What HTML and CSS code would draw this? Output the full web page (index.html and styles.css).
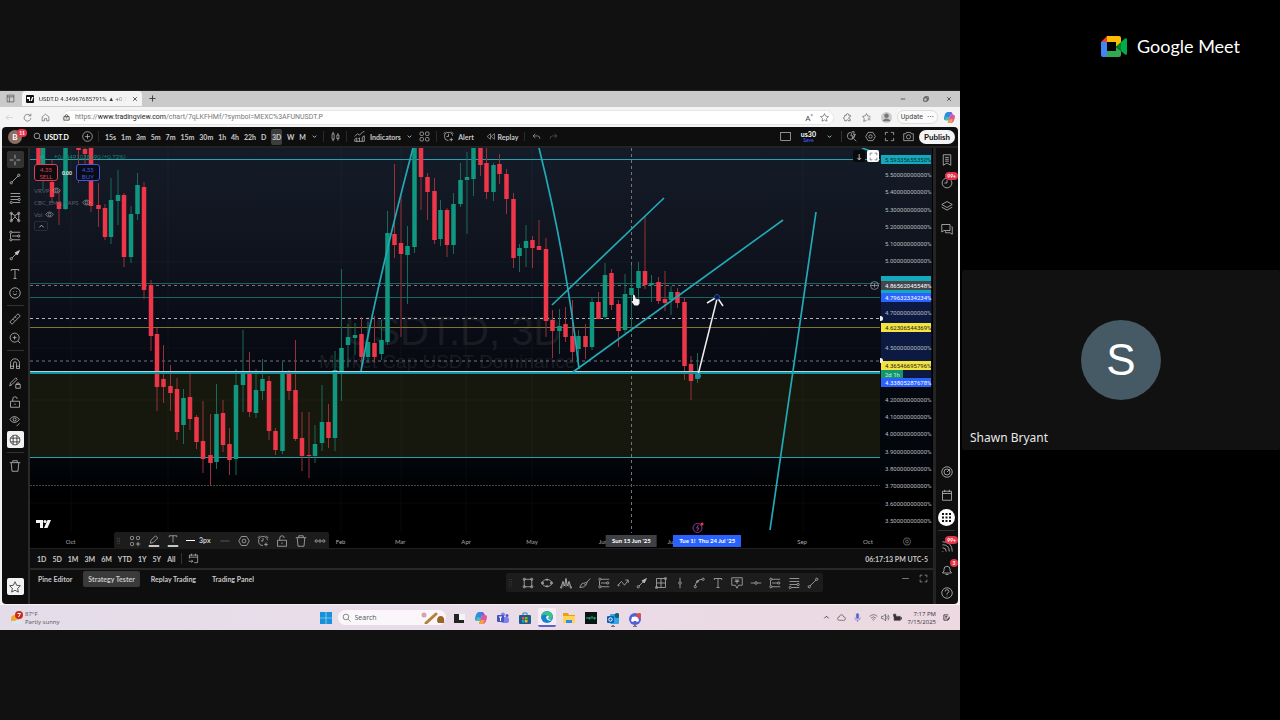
FILE: index.html
```html
<!DOCTYPE html>
<html lang="en">
<head>
<meta charset="utf-8">
<title>Google Meet</title>
<link rel="stylesheet" href="styles.css">
</head>
<body>
<svg class="defs" aria-hidden="true">
  <symbol id="chev" viewBox="0 0 16 16"><path d="M4 6l4 4 4-4"/></symbol>
  <symbol id="search" viewBox="0 0 16 16"><circle cx="7" cy="7" r="5"/><path d="M11 11l4 4"/></symbol>
  <symbol id="plusc" viewBox="0 0 16 16"><circle cx="8" cy="8" r="7"/><path d="M8 4.500v7M4.500 8h7"/></symbol>
  <symbol id="candles" viewBox="0 0 16 16"><path d="M3 4h3v8H3zM4.500 1v3M4.500 12v3M10 6h3v5h-3zM11.500 3v3M11.500 11v3"/></symbol>
  <symbol id="indic" viewBox="0 0 16 16"><path d="M1 8l4-4 3 2 5-5h2M1 15v-3l3-2v5M4 15h11V7l-3 2v6M8 15v-5l-2 1M1 15h4"/></symbol>
  <symbol id="grid4" viewBox="0 0 16 16"><rect x="1.500" y="1.500" width="5" height="5" rx="1.500"/><rect x="9.500" y="1.500" width="5" height="5" rx="1.500"/><rect x="1.500" y="9.500" width="5" height="5" rx="1.500"/><rect x="9.500" y="9.500" width="5" height="5" rx="1.500"/></symbol>
  <symbol id="grid4p" viewBox="0 0 16 16"><rect x="2" y="2" width="4" height="4" rx="1"/><rect x="10" y="2" width="4" height="4" rx="1"/><rect x="2" y="10" width="4" height="4" rx="1"/><path d="M12 9v6M9 12h6"/></symbol>
  <symbol id="alarm" viewBox="0 0 16 16"><path d="M14 7a6 6 0 1 0-6 7M8 4v4H5M1 4l3-3M12 1l3 3M12 10v5M9.500 12.500h5"/></symbol>
  <symbol id="replay" viewBox="0 0 16 16"><path d="M8 3L2 8l6 5zM15 3L9 8l6 5z"/></symbol>
  <symbol id="undo" viewBox="0 0 16 16"><path d="M6 3L2 7l4 4M2 7h8q4 0 4 5"/></symbol>
  <symbol id="redo" viewBox="0 0 16 16"><path d="M10 3l4 4-4 4M14 7H6q-4 0-4 5"/></symbol>
  <symbol id="square" viewBox="0 0 16 16"><rect x="1" y="2" width="14" height="12"/></symbol>
  <symbol id="quick" viewBox="0 0 16 16"><path d="M12 6a5 5 0 1 1-5-4M11 11l4 4M9 1L7 7h3l-1 4 5-6h-3l1-4z"/></symbol>
  <symbol id="hex" viewBox="0 0 16 16"><path d="M4.500 2h7L15 8l-3.500 6h-7L1 8z"/><circle cx="8" cy="8" r="2.500"/></symbol>
  <symbol id="full" viewBox="0 0 16 16"><path d="M2 6V2h4M10 2h4v4M14 10v4h-4M6 14H2v-4"/></symbol>
  <symbol id="cam" viewBox="0 0 16 16"><path d="M1 4h3l1-2h6l1 2h3v10H1z"/><circle cx="8" cy="8.500" r="3"/></symbol>
  <symbol id="cross" viewBox="0 0 16 16"><path d="M8 1v5M8 10v5M1 8h5M10 8h5"/></symbol>
  <symbol id="trend" viewBox="0 0 16 16"><path d="M4 12l8-8"/><circle cx="3" cy="13" r="1.500"/><circle cx="13" cy="3" r="1.500"/></symbol>
  <symbol id="fib" viewBox="0 0 16 16"><path d="M2 2h13M2 6h13M2 10h10M5 14h10"/><circle cx="13.500" cy="10" r="1.500"/><circle cx="3" cy="14" r="1.500"/></symbol>
  <symbol id="xabcd" viewBox="0 0 16 16"><path d="M3 13V3l5 3 5-3v10L8 8zM8 6v2"/><circle cx="3" cy="3" r="1.500"/><circle cx="13" cy="3" r="1.500"/><circle cx="3" cy="13" r="1.500"/><circle cx="13" cy="13" r="1.500"/></symbol>
  <symbol id="proj" viewBox="0 0 16 16"><path d="M4 3h11M4 8h8M4 13h11M2 5v6"/><circle cx="2.500" cy="3" r="1.500"/><circle cx="13" cy="8" r="1.500"/><circle cx="2.500" cy="13" r="1.500"/></symbol>
  <symbol id="arrow" viewBox="0 0 16 16"><path d="M4 12l9-9"/><circle cx="3" cy="13" r="1.500"/><path class="solid" d="M14 2l-3 6-3-3z"/></symbol>
  <symbol id="text" viewBox="0 0 16 16"><path d="M3 4V2h10v2M8 2v12M6 14h4"/></symbol>
  <symbol id="smile" viewBox="0 0 16 16"><circle cx="8" cy="8" r="7"/><path d="M5.500 9q2.500 3 5 0M6 5.500v1M10 5.500v1"/></symbol>
  <symbol id="ruler" viewBox="0 0 16 16"><path d="M1 12L12 1l3 3L4 15zM5 8l2 2M8 5l2 2"/></symbol>
  <symbol id="zoomin" viewBox="0 0 16 16"><circle cx="7.500" cy="7.500" r="6"/><path d="M12 12l3 3M7.500 5v5M5 7.500h5"/></symbol>
  <symbol id="magnet" viewBox="0 0 16 16"><path d="M2 14V7a6 6 0 0 1 12 0v7h-4V7a2 2 0 0 0-4 0v7zM2 11h4M10 11h4"/></symbol>
  <symbol id="penlock" viewBox="0 0 16 16"><path d="M1 12l1-4 7-7 2 2-7 7zM9 10h6v5H9zM10.500 10V8h3v2"/></symbol>
  <symbol id="lock" viewBox="0 0 16 16"><path d="M2 7h12v8H2zM5 7V4a3 3 0 0 1 6 0M8 10v2"/></symbol>
  <symbol id="eye" viewBox="0 0 16 16"><path d="M1 8q7-9 14 0-7 9-14 0z"/><circle cx="8" cy="8" r="2.500"/></symbol>
  <symbol id="eyepen" viewBox="0 0 16 16"><path d="M1 6q6-8 13 0-7 8-13 0zM10 15l4-4"/><circle cx="7.500" cy="6" r="2"/></symbol>
  <symbol id="globe" viewBox="0 0 16 16"><circle cx="8" cy="8" r="6.500"/><path d="M5.500 2v12M10.500 2v12M2 5.500h12M2 10.500h12"/></symbol>
  <symbol id="trash" viewBox="0 0 16 16"><path d="M1 3.500h14M5 3V1h6v2M3 4l1 11h8l1-11"/></symbol>
  <symbol id="star" viewBox="0 0 16 16"><path d="M8 1l2.200 4.700 5 .6-3.700 3.500 1 5L8 12.300 3.500 14.800l1-5L.8 6.300l5-.6z"/></symbol>
  <symbol id="pen" viewBox="0 0 16 16"><path d="M3 11l1-4 6-6 3 3-6 6z"/><path class="bar" d="M1 14.500h14"/></symbol>
  <symbol id="textc" viewBox="0 0 16 16"><path d="M3 3V1h10v2M8 1v9"/><path class="bar" d="M1 14.500h14"/></symbol>
  <symbol id="dash" viewBox="0 0 16 16"><path d="M2 8h12"/></symbol>
  <symbol id="dots" viewBox="0 0 16 16"><circle cx="3" cy="8" r="1.600"/><circle cx="8" cy="8" r="1.600"/><circle cx="13" cy="8" r="1.600"/></symbol>
  <symbol id="grip" viewBox="0 0 16 16"><path stroke-dasharray="1.500 2.500" d="M6 2v13M10 2v13"/></symbol>
  <symbol id="cal" viewBox="0 0 16 16"><path d="M2 3h12v12H2zM2 6h12M5 1v3M11 1v3"/></symbol>
  <symbol id="calgo" viewBox="0 0 16 16"><path d="M2 8V3h12v11H9M2 6h12M5 1v3M11 1v3M1 12h6M5 10l2 2-2 2"/></symbol>
  <symbol id="rect" viewBox="0 0 16 16"><path d="M3 3h10v10H3z"/><circle cx="3" cy="3" r="1.500"/><circle cx="13" cy="3" r="1.500"/><circle cx="3" cy="13" r="1.500"/><circle cx="13" cy="13" r="1.500"/></symbol>
  <symbol id="ellipse" viewBox="0 0 16 16"><ellipse cx="8" cy="8" rx="6" ry="4.500"/><circle cx="2" cy="8" r="1.500"/><circle cx="14" cy="8" r="1.500"/><circle cx="8" cy="3.500" r="1"/><circle cx="8" cy="12.500" r="1"/></symbol>
  <symbol id="waves" viewBox="0 0 16 16"><path d="M1 14l3-8 2 6 2-10 2 10 2-6 3 8M4 13V6M12 13V6M8 13V2"/><circle cx="1.500" cy="14" r="1"/><circle cx="14.500" cy="14" r="1"/></symbol>
  <symbol id="brush" viewBox="0 0 16 16"><path d="M1 14q2-6 5-6l3 3q-2 3-8 3zM7 8q3 1 8-6M9 11l2-4"/></symbol>
  <symbol id="zig" viewBox="0 0 16 16"><path d="M2 10l4-4 4 5 5-7M11 4h4v4"/><circle cx="2" cy="11" r="1"/></symbol>
  <symbol id="boxplus" viewBox="0 0 16 16"><path d="M2 2h12v12H2zM8 2v12M2 8h12"/><circle cx="2" cy="14" r="1.500"/><circle cx="14" cy="2" r="1.500"/></symbol>
  <symbol id="vline" viewBox="0 0 16 16"><path d="M8 1v5M8 10v5"/><circle cx="8" cy="8" r="1.700"/></symbol>
  <symbol id="hline" viewBox="0 0 16 16"><path d="M1 8h5M10 8h5"/><circle cx="8" cy="8" r="1.700"/></symbol>
  <symbol id="curve" viewBox="0 0 16 16"><path d="M3 12q1-8 9-9"/><circle cx="3" cy="13" r="1.500"/><circle cx="13.500" cy="3" r="1.500"/><circle cx="6" cy="6" r="1.200"/></symbol>
  <symbol id="note" viewBox="0 0 16 16"><path d="M1 1h14v10h-5l-2 4-2-4H1zM5 4h6M8 4v5M5 6h6"/></symbol>
  <symbol id="notif" viewBox="0 0 16 16"><path d="M12 2H2v12h9l3-3V6M5 6h5M5 9h4M11 14v-3h3"/></symbol>
  <symbol id="list" viewBox="0 0 16 16"><path d="M3 1h10v14l-5-3-5 3zM5.500 4.500h5M5.500 7h5M5.500 9.500h5"/></symbol>
  <symbol id="clock" viewBox="0 0 16 16"><circle cx="8" cy="8" r="6.500"/><path d="M8 4v4H4.500"/></symbol>
  <symbol id="layers" viewBox="0 0 16 16"><path d="M8 2l7 4-7 4-7-4zM1 9.500l7 4 7-4"/></symbol>
  <symbol id="chat" viewBox="0 0 16 16"><path d="M1 12V2h11v8H4zM14 5h1v10l-3-2H6v-2"/></symbol>
  <symbol id="target" viewBox="0 0 16 16"><circle cx="8" cy="8" r="7"/><circle cx="8" cy="8" r="4"/><path d="M8 8l4-4"/></symbol>
  <symbol id="feed" viewBox="0 0 16 16"><path d="M2 14h1M2 9q5 0 5 5M2 5q9 0 9 9M2 1q13 0 13 13"/></symbol>
  <symbol id="bell" viewBox="0 0 16 16"><path d="M2 12l2-3V7a4 4 0 0 1 8 0v2l2 3zM6 14h4"/></symbol>
  <symbol id="help" viewBox="0 0 16 16"><circle cx="8" cy="8" r="7"/><path d="M5.500 6q0-2.500 2.500-2.500T10.500 6Q10.500 7.500 8 8.500V10M8 11.500v1"/></symbol>
  <symbol id="home" viewBox="0 0 16 16"><path d="M2 7l6-5 6 5v7h-4v-4H6v4H2z"/></symbol>
  <symbol id="reload" viewBox="0 0 16 16"><path d="M13 5a6 6 0 1 0 1 4M14 1v4h-4"/></symbol>
  <symbol id="back" viewBox="0 0 16 16"><path d="M14 8H2M7 3L2 8l5 5"/></symbol>
  <symbol id="bag" viewBox="0 0 16 16"><path d="M2 6h12v8H2zM5 6V3q3-3 6 0v3M6 9h4"/></symbol>
  <symbol id="x" viewBox="0 0 16 16"><path d="M3 3l10 10M13 3L3 13"/></symbol>
  <symbol id="plus" viewBox="0 0 16 16"><path d="M8 1v14M1 8h14"/></symbol>
  <symbol id="tabs" viewBox="0 0 16 16"><path d="M2 2h12v12H2zM2 5h12M6 5v9"/></symbol>
  <symbol id="restore" viewBox="0 0 16 16"><path d="M2 5h9v9H2zM5 5V2h9v9h-3"/></symbol>
  <symbol id="ext" viewBox="0 0 16 16"><path d="M3 4h3q0-3 2-3t2 3h3v3q-3 0-3 2t3 2v3h-3q0-2-2-2t-2 2H3v-3q-2 0-2-2t2-2z"/></symbol>
  <symbol id="favs" viewBox="0 0 16 16"><path d="M8 13l-5 2 1-5-3-4 5-1 2-4 2 4 5 1M10 9h5M10 12h5"/></symbol>
  <symbol id="up" viewBox="0 0 16 16"><path d="M3 10l5-5 5 5"/></symbol>
  <symbol id="cloud" viewBox="0 0 16 16"><path d="M4 13a3 3 0 0 1 0-6q1-4 4-4t4 4a3 3 0 0 1 0 6z"/></symbol>
  <symbol id="mic" viewBox="0 0 16 16"><rect class="solid" x="6" y="1" width="4" height="9" rx="2"/><path d="M3 8q0 5 5 5t5-5M8 13v3"/></symbol>
  <symbol id="wifi" viewBox="0 0 16 16"><path d="M1 6q7-6 14 0M3.500 9q4.500-4 9 0M6 11.500q2-2 4 0M8 13.500v1"/></symbol>
  <symbol id="vol" viewBox="0 0 16 16"><path d="M1 6h3l4-4v12l-4-4H1zM10 5q2 3 0 6M12.500 3q3.500 5 0 10"/></symbol>
  <symbol id="batt" viewBox="0 0 16 16"><path class="solid" d="M2 6h11v7H2zM14 8h1v3h-1zM1 2h4v4H1z"/></symbol>
</svg>
<main class="meeting">
  <section class="stage" aria-label="Presentation">
    <div class="share">
      <div class="tabbar">
        <svg class="i9"><use href="#tabs"/></svg>
        <div class="tab">
          <svg class="fav" viewBox="0 0 8 8"><rect width="8" height="8" rx="1"/><path d="M1 2h3v4H3V4H1zM6 2h1.500L6 6H4.500z"/></svg>
          <span class="tabtitle">USDT.D 4.34967685791% ▲ +0.7</span>
          <button aria-label="Close tab"><svg class="i6"><use href="#x"/></svg></button>
        </div>
        <button aria-label="New tab"><svg class="i7"><use href="#plus"/></svg></button>
        <div class="winctl">
          <button aria-label="Minimize"><svg class="i6"><use href="#dash"/></svg></button>
          <button aria-label="Restore"><svg class="i6"><use href="#restore"/></svg></button>
          <button aria-label="Close"><svg class="i6"><use href="#x"/></svg></button>
        </div>
      </div>
      <div class="address">
        <button class="pale" aria-label="Back"><svg class="i9"><use href="#back"/></svg></button>
        <button aria-label="Reload"><svg class="i9"><use href="#reload"/></svg></button>
        <button aria-label="Home"><svg class="i9"><use href="#home"/></svg></button>
        <div class="urlbox">
          <svg class="i7"><use href="#bag"/></svg>
          <a class="url" href="#chart">https://<b>www.tradingview.com</b>/chart/7qLKFHMf/?symbol=MEXC%3AFUNUSDT.P</a>
          <span class="readaloud">A<sup>»</sup></span>
          <svg class="i9"><use href="#star"/></svg>
        </div>
        <div class="tools">
          <svg class="i9"><use href="#ext"/></svg>
          <svg class="i9"><use href="#favs"/></svg>
          <svg class="person" viewBox="0 0 12 12"><circle cx="6" cy="6" r="6"/><circle cx="6" cy="4" r="2.500"/><path d="M2 9q4-4 8 0v1H2z"/></svg>
          <button class="update">Update <span>⋯</span></button>
          <svg class="copilot" viewBox="0 0 12 12"><use href="#cop"/></svg>
        </div>
      </div>

      <div class="tv">
        <header class="tvhead">
          <div class="g-user"><span class="ava">B</span><sup class="badge">11</sup></div>
          <button class="sym"><svg class="i9"><use href="#search"/></svg>USDT.D</button>
          <button class="g-add" aria-label="Compare"><svg class="i11"><use href="#plusc"/></svg></button>
          <nav class="ints">
            <button>15s</button><button>1m</button><button>3m</button><button>5m</button><button>7m</button><button>15m</button><button>30m</button><button>1h</button><button>4h</button><button>22h</button><button>D</button><button class="on">3D</button><button>W</button><button>M</button><svg class="i7"><use href="#chev"/></svg>
          </nav>
          <button class="g-can" aria-label="Candles"><svg class="i11"><use href="#candles"/></svg></button>
          <button class="g-ind"><svg class="i11"><use href="#indic"/></svg>Indicators<svg class="i7"><use href="#chev"/></svg></button>
          <button class="g-lay" aria-label="Templates"><svg class="i11"><use href="#grid4"/></svg></button>
          <button class="g-al"><svg class="i11"><use href="#alarm"/></svg>Alert</button>
          <button class="g-rep"><svg class="i9"><use href="#replay"/></svg>Replay</button>
          <div class="g-undo"><button aria-label="Undo"><svg class="i9"><use href="#undo"/></svg></button><button class="dim" aria-label="Redo"><svg class="i9"><use href="#redo"/></svg></button></div>
          <div class="g-right">
            <svg class="i11"><use href="#square"/></svg>
            <button class="layout"><span>us30</span><small>Save</small></button>
            <svg class="i7"><use href="#chev"/></svg>
            <i class="vs"></i>
            <svg class="i11"><use href="#quick"/></svg>
            <svg class="i11"><use href="#hex"/></svg>
            <svg class="i11"><use href="#full"/></svg>
            <svg class="i11"><use href="#cam"/></svg>
            <button class="publish">Publish</button>
          </div>
        </header>

        <aside class="left">
          <button class="sel"><svg><use href="#cross"/></svg></button>
          <button><svg><use href="#trend"/></svg></button>
          <button><svg><use href="#fib"/></svg></button>
          <button><svg><use href="#xabcd"/></svg></button>
          <button><svg><use href="#proj"/></svg></button>
          <button><svg><use href="#arrow"/></svg></button>
          <button><svg><use href="#text"/></svg></button>
          <button><svg><use href="#smile"/></svg></button>
          <hr>
          <button><svg><use href="#ruler"/></svg></button>
          <button><svg><use href="#zoomin"/></svg></button>
          <hr>
          <button><svg><use href="#magnet"/></svg></button>
          <button><svg><use href="#penlock"/></svg></button>
          <button><svg><use href="#lock"/></svg></button>
          <button><svg><use href="#eyepen"/></svg></button>
          <button class="inv"><svg><use href="#globe"/></svg></button>
          <hr>
          <button><svg><use href="#trash"/></svg></button>
          <button class="inv last"><svg><use href="#star"/></svg></button>
        </aside>

        <section class="center" id="chart">
          <div class="plotrow">
            <div class="plot">
              <p class="wm1">USDT.D, 3D</p>
              <p class="wm2">Market Cap USDT Dominance</p>
              <svg class="canvas" viewBox="30 148 850 385" preserveAspectRatio="none">
                <rect class="zone" x="30" y="373" width="850" height="84"/>
                <path class="gridl" d="M30 262H880M30 348H880M30 400H880M30 503H880M71 148V533M168 148V533M341 148V533M401 148V533M466 148V533M532 148V533M803 148V533"/>
                <path class="teal1" d="M30 159.500H880M30 457.500H880"/>
                <path class="teal2" d="M30 283.500H880M30 297.500H880"/>
                <path class="yel" d="M30 327.500H880"/>
                <path class="dsh" d="M30 285.500H880M30 361H880M631.500 148V533"/>
                <path class="dshw" d="M30 318.500H880"/>
                <path class="dot" d="M30 485.500H880"/>
                <path class="gw" d="M43 148V190M65.500 148V210M111 178V244M118 170V225M131 206V263M137.500 173V220M183.500 389V444M216.500 384V469M236 369V475M243 330V412M256 369V418M262.500 359V400M282.500 362V454M315 425V463M322 385V451M335 351V451M341.500 269V401M348 324V367M355 323V355M368 322V363M381.500 320V360M387.500 211V345M407.500 226V304M414.500 148V253M440.500 200V246M453.500 193V254M460.500 163V207M467 152V234M473.500 148V196M493.500 163V201M519.500 244V272M526 225V267M559.500 309V354M578.500 330V368M592 298V350M605 263V320M625 274V333M631.500 265V332M638.500 262V299M651.500 275V302M671 286V315M697.500 353V383"/>
                <path class="rw" d="M38.500 148V180M52 160V203M59 190V225M78.500 148V183M85 148V165M91 148V212M98.500 183V227M105 204V240M124 193V267M144 182V299M151 280V351M157 328V411M163.500 345V403M170.500 365V411M177 378V440M190 371V430M196.500 415V449M203 401V473M210.500 414V486M223 400V452M229.500 428V475M249.500 352V417M269 376V440M275.500 428V455M289 370V400M295.500 340V441M302 412V471M309 412V478M328.500 404V448M361.500 317V371M374.500 316V363M394.500 164V258M401 195V337M421 148V210M427.500 173V220M434.500 178V244M447 208V257M480.500 148V176M486.500 148V199M499.500 154V184M506.500 169V214M513.500 193V268M532.500 236V268M539 220V250M546 238V337M552.500 310V358M565.500 307V342M572.500 300V360M585.500 324V359M598.500 292V319M611.500 269V310M618.500 300V347M645 216V289M658.500 277V304M665 271V311M677.500 288V308M684.500 298V380M691 356V400"/>
                <path class="gb" d="M43 148V164M65.500 148V209M111 200V237M118 195V201M131 214V257M137.500 185V214M183.500 398V425M216.500 414V462M236 385V459M243 371V385M256 390V413M262.500 379V391M282.500 372V451M315 444V456M322 422V443M335 370V438M341.500 348V371M348 337V345M355 335V338M368 342V357M381.500 340V354M387.500 233V342M407.500 246V255M414.500 148V247M440.500 210V239M453.500 204V245M460.500 180V204M467 177V180M473.500 148V179M493.500 165V192M519.500 248V256M526 241V248M559.500 326V331M578.500 336V349M592 302V347M605 275V317M625 294V330M631.500 288V295M638.500 271V288M651.500 283V285M671 292V300M697.500 373V379"/>
                <path class="rb" d="M38.500 148V165M52 182V197M59 202V209M78.500 148V150M85 149V154M91 148V206M98.500 205V209M105 208V237M124 195V257M144 187V290M151 285V336M157 334V387M163.500 379V387M170.500 386V393M177 389V432M190 397V419M196.500 417V442M203 441V459M210.500 455V463M223 413V445M229.500 444V460M249.500 371V412M269 381V431M275.500 431V450M289 374V391M295.500 390V439M302 438V456M309 455V456M328.500 422V438M361.500 334V357M374.500 343V357M394.500 234V245M401 243V254M421 148V177M427.500 177V192M434.500 191V240M447 210V245M480.500 148V165M486.500 163V192M499.500 164V174M506.500 174V199M513.500 199V258M532.500 240V248M539 246V250M546 249V321M552.500 320V331M565.500 324V337M572.500 336V352M585.500 336V347M598.500 302V319M611.500 273V305M618.500 304V331M645 271V285M658.500 282V301M665 299V303M677.500 292V303M684.500 302V366M691 364V381"/>
                <path class="base1" d="M30 373H880"/><path class="base2" d="M30 371.500H880"/>
                <path class="draw" d="M361 371Q379 276 413 148M539 148Q566 256 579 369M552 305L664 198M573 372L783 220M816 212L770 530M862 148L876 153"/>
                <path class="arr" d="M698 375L717 299M707 303L717 297L723 306"/>
                <circle class="hand1" cx="717" cy="297" r="2.500"/><circle class="hand2" cx="698" cy="376" r="2.500"/>
                <circle class="ev" cx="697.500" cy="528" r="4.500"/><path class="ev" d="M698.500 525l-2 3h2.500l-2 3"/><circle class="evd" cx="702" cy="524" r="1.500"/>
                <path class="cursor" d="M633 295q1-1 2 1l.500 2.500 4 1v4l-1.500 2h-3.500l-3-4 1.500-.500z"/>
                <path class="logo" d="M36 520h7v8h-3v-5h-4zM47.500 520h3.500l-3.500 8h-3.500z"/><circle class="logo" cx="45" cy="521.500" r="1.500"/>
              </svg>
              <div class="legend">
                <p class="chg"><i></i>+0.03491028690 (+0.72%)</p>
                <div class="trade"><button class="sell">4.35<br>SELL</button><b>0.00</b><button class="buy">4.35<br>BUY</button></div>
                <p class="ind">VRVP <svg class="i9"><use href="#eye"/></svg></p>
                <p class="ind">CBC_EMA_TAPS <svg class="i9"><use href="#eye"/></svg></p>
                <p class="ind">Vol <svg class="i9"><use href="#eye"/></svg></p>
                <button class="fold" aria-label="Collapse"><svg class="i7"><use href="#up"/></svg></button>
              </div>
              <div class="panebtns"><button>↓</button><button class="w" aria-label="Maximize"><svg class="i9"><use href="#full"/></svg></button></div>
              <svg class="addat i9"><use href="#plusc"/></svg>
            </div>
            <div class="prices">
              <i class="span"></i>
              <span>5.50000000000%</span><span>5.40000000000%</span><span>5.30000000000%</span><span>5.20000000000%</span><span>5.10000000000%</span><span>5.00000000000%</span><span></span><span></span><span>4.70000000000%</span><span></span><span>4.50000000000%</span><span></span><span></span><span>4.20000000000%</span><span>4.10000000000%</span><span>4.00000000000%</span><span>3.90000000000%</span><span>3.80000000000%</span><span>3.70000000000%</span><span>3.60000000000%</span><span>3.50000000000%</span>
              <b class="cy" style="top:7px">5.59335655350%</b>
              <b class="cy" style="top:128px"></b>
              <b class="cy" style="top:141px"></b>
              <b class="gr" style="top:133px">4.86562045548%</b>
              <b class="bl" style="top:145px">4.79632334234%</b>
              <b class="ye" style="top:175px">4.62306544369%</b>
              <b class="ye" style="top:213px">4.36546695796%</b>
              <b class="gn" style="top:222px">2d 1h</b>
              <b class="bl" style="top:230px">4.33805287678%</b>
              <i class="mk" style="top:168px"></i><i class="mk" style="top:210px"></i>
            </div>
          </div>
          <div class="times">
            <span style="left:4.500%">Oct</span><span style="left:34.400%">Feb</span><span style="left:41%">Mar</span><span style="left:48.300%">Apr</span><span style="left:55.600%">May</span><span style="left:63.500%">Jun</span><span style="left:71%">Jul</span><span style="left:85.500%">Sep</span><span style="left:92.800%">Oct</span>
            <b class="tg" style="left:66.600%">Sun 15 Jun '25</b>
            <b class="tb" style="left:75%">Tue 1! &nbsp;Thu 24 Jul '25</b>
            <svg class="i9" style="left:97.100%"><use href="#hex"/></svg>
            <div class="float edit">
              <svg class="i7 dim"><use href="#grip"/></svg>
              <svg><use href="#grid4p"/></svg><svg><use href="#pen"/></svg><svg><use href="#textc"/></svg>
              <span class="px"><i></i>3px</span>
              <svg class="dim"><use href="#dash"/></svg><svg><use href="#hex"/></svg><svg><use href="#alarm"/></svg><svg><use href="#lock"/></svg><svg><use href="#trash"/></svg><svg><use href="#dots"/></svg>
            </div>
          </div>
          <div class="range">
            <button>1D</button><button>5D</button><button>1M</button><button>3M</button><button>6M</button><button>YTD</button><button>1Y</button><button>5Y</button><button>All</button><i class="vs"></i><svg class="i11"><use href="#calgo"/></svg>
            <time>06:17:13 PM UTC-5</time>
          </div>
          <div class="panels">
            <button>Pine Editor</button><button class="on">Strategy Tester</button><button>Replay Trading</button><button>Trading Panel</button>
            <div class="pctl"><svg class="i9"><use href="#dash"/></svg><svg class="i9"><use href="#full"/></svg></div>
            <div class="float favsbar">
              <svg class="i9 dim"><use href="#grip"/></svg><svg><use href="#rect"/></svg><svg><use href="#ellipse"/></svg><svg><use href="#waves"/></svg><svg><use href="#brush"/></svg><svg><use href="#proj"/></svg><svg><use href="#zig"/></svg><svg><use href="#arrow"/></svg><svg><use href="#boxplus"/></svg><svg><use href="#vline"/></svg><svg><use href="#curve"/></svg><svg><use href="#text"/></svg><svg><use href="#note"/></svg><svg><use href="#hline"/></svg><svg><use href="#proj"/></svg><svg><use href="#fib"/></svg><svg><use href="#trend"/></svg>
            </div>
          </div>
        </section>

        <aside class="right">
          <button><svg><use href="#list"/></svg></button>
          <button><svg><use href="#clock"/></svg><sup class="badge">99+</sup></button>
          <button><svg><use href="#layers"/></svg></button>
          <button><svg><use href="#chat"/></svg></button>
          <button class="gap"><svg><use href="#target"/></svg></button>
          <button><svg><use href="#cal"/></svg></button>
          <button><svg class="apps" viewBox="0 0 17 17"><circle cx="8.500" cy="8.500" r="8.500"/><path d="M4 4h2v2H4zM7.500 4h2v2h-2zM11 4h2v2h-2zM4 7.500h2v2H4zM7.500 7.500h2v2h-2zM11 7.500h2v2h-2zM4 11h2v2H4zM7.500 11h2v2h-2zM11 11h2v2h-2z"/></svg></button>
          <hr>
          <button><svg><use href="#feed"/></svg><sup class="badge">99+</sup></button>
          <button><svg><use href="#bell"/></svg><sup class="badge">3</sup></button>
          <button><svg><use href="#help"/></svg></button>
        </aside>
      </div>

      <footer class="taskbar">
        <div class="weather">
          <svg viewBox="0 0 14 14"><circle cx="5" cy="8" r="4" fill="#f3a72e"/><path d="M2 13q-1-4 3-3 2-3 5 0 3 0 2 3z" fill="#d7e6f5"/><circle cx="9" cy="4" r="4" fill="#c42b1c"/><path d="M7.500 2.500h3L8.500 6" stroke="#fff" fill="none"/></svg>
          <p>87°F<br>Partly sunny</p>
        </div>
        <div class="apps-row">
          <svg class="app" viewBox="0 0 12 12"><path fill="#1592dc" d="M0 0h5.700v5.700H0zM6.300 0H12v5.700H6.300zM0 6.300h5.700V12H0zM6.300 6.300H12V12H6.300z"/></svg>
          <label class="find"><svg class="i9"><use href="#search"/></svg><input type="text" placeholder="Search" aria-label="Search"><svg class="bat" viewBox="0 0 24 12"><circle cx="3" cy="3" r="2.500" fill="#d9a0ae"/><path d="M5 11L15 2" stroke="#b3813f" stroke-width="3" stroke-linecap="round"/><path d="M16 9q0-5 4-5t3 7h-6z" fill="#9a6526"/></svg></label>
          <svg class="app" viewBox="0 0 12 12"><path fill="#222" d="M1 2h6v5h4v4H1z"/><path fill="#f4f4f4" d="M6 2h6v6H6z"/></svg>
          <svg class="app" viewBox="0 0 12 12"><g id="cop"><path fill="#2a8de0" d="M4 0h4l-3 9H2Q0 9 0 7q1-7 4-7z"/><path fill="#e2549a" d="M8 12H4l3-9h3q2 0 2 2-1 7-4 7z"/><path fill="#4cc0a0" d="M1 9h4l1-3-4-1z"/><path fill="#f2a33c" d="M4 12h4l2-4H6z"/><path fill="#7a5be8" d="M7 0h1l2 3H6z"/></g></svg>
          <svg class="app" viewBox="0 0 12 12"><circle cx="6" cy="2.500" r="2" fill="#7b83eb"/><circle cx="10" cy="3.500" r="1.500" fill="#5059c9"/><rect x="4" y="5" width="8" height="6" rx="2" fill="#7b83eb"/><rect y="3" width="7" height="7" rx="1" fill="#4b53bc"/><path d="M2 5h3M3.500 5v4" stroke="#fff"/></svg>
          <svg class="app" viewBox="0 0 12 12"><path d="M4 3V1h4v2" stroke="#2b83c6" fill="none"/><rect y="3" width="12" height="9" rx="1" fill="#1e5b8c"/><path fill="#f35325" d="M3 5h2.500v2.500H3z"/><path fill="#81bc06" d="M6 5h2.500v2.500H6z"/><path fill="#05a6f0" d="M3 8h2.500v2.500H3z"/><path fill="#ffba08" d="M6 8h2.500v2.500H6z"/></svg>
          <span class="active"><svg class="app" viewBox="0 0 12 12"><circle cx="6" cy="6" r="6" fill="#1681cf"/><path fill="#39c28e" d="M2 2q5-4 9 1 2 3-1 5H6q2-3-1-4T0 6q0-3 2-4z"/><path fill="#d9f1fb" d="M5 7q0-3 3-2l-1 3 4 1q-4 2-6-2z"/></svg></span>
          <svg class="app" viewBox="0 0 12 12"><path fill="#e3a21a" d="M0 1h5l1 2h6v8H0z"/><path fill="#ffd35a" d="M0 4h12v7H0z"/><path fill="#2f8fe0" d="M3 8h6v3H3z"/></svg>
          <svg class="app" viewBox="0 0 12 12"><path fill="#0a1412" d="M0 0h12v12H0z"/><path d="M2 7V5M4 5v2h1V5M7 4v3M9 5v2h1V5" stroke="#1fbf80"/></svg>
          <span class="run"><svg class="app" viewBox="0 0 12 12"><rect x="3" y="1" width="9" height="10" rx="1" fill="#31a5ea"/><rect y="3" width="7" height="7" rx="1" fill="#0f63b5"/><circle cx="3.500" cy="6.500" r="1.700" fill="none" stroke="#fff"/><circle cx="10" cy="2.500" r="2.500" fill="#165d78"/></svg></span>
          <span class="run"><svg class="app" viewBox="0 0 12 12"><circle cx="6" cy="6" r="6" fill="#5360d8"/><path fill="#fff" d="M3 4q3-1 6 0l1 4-2 1-1-1H5L4 9 2 8z"/><circle cx="10" cy="2.500" r="2.500" fill="#e04848"/></svg></span>
        </div>
        <div class="tray">
          <svg class="i7"><use href="#up"/></svg><svg class="i9"><use href="#cloud"/></svg><svg class="i9 mic"><use href="#mic"/></svg><span><svg class="i9"><use href="#wifi"/></svg><svg class="i9"><use href="#vol"/></svg><svg class="i9"><use href="#batt"/></svg></span>
          <time>7:17 PM<br>7/15/2025</time>
          <svg class="i7"><use href="#notif"/></svg>
        </div>
      </footer>
    </div>
  </section>
  <aside class="people">
    <div class="brand">
      <svg viewBox="0 0 26 21"><path fill="#ea4335" d="M0 6L6 0v6z"/><path fill="#fbbc04" d="M6 0h12q2 0 2 2v5l-5 4V6H6z"/><path fill="#4285f4" d="M0 6h6v15H2q-2 0-2-2z"/><path fill="#34a853" d="M6 15h9v-4l5 4v4q0 2-2 2H6z"/><path fill="#00832d" d="M15 10.500L20 6v9z"/><path fill="#00ac47" d="M20 6l4-3.500q2-1 2 1v14q0 2-2 1L20 15z"/></svg>
      <span>Google Meet</span>
    </div>
    <article class="tile"><span class="initial">S</span><p>Shawn Bryant</p></article>
  </aside>
</main>
</body>
</html>
```
FILE: styles.css
```css
* { box-sizing: border-box; }
body { margin: 0; background: #000; font-family: "Open Sans", "Noto Sans", sans-serif; }
p { margin: 0; }
button { margin: 0; padding: 0; border: 0; background: none; color: inherit; font: inherit; display: flex; align-items: center; justify-content: center; white-space: nowrap; }
svg { display: block; flex: none; fill: none; stroke: currentColor; stroke-width: 1; width: 12px; height: 12px; }
svg.i6 { width: 6px; height: 6px; stroke-width: 2; }
svg.i7 { width: 7px; height: 7px; stroke-width: 2; }
svg.i9 { width: 9px; height: 9px; stroke-width: 1; }
svg.i11 { width: 11px; height: 11px; }
.solid { fill: currentColor; }
.bar { stroke: #fff; stroke-width: 2; }
.defs { position: absolute; width: 0; height: 0; }
.dim { opacity: .5; }

.meeting { display: grid; grid-template-columns: 3fr 1fr; min-height: 100vh; }
.stage { background: #111; display: flex; align-items: center; min-width: 0; }
.share { width: 100%; aspect-ratio: 16 / 9; display: flex; flex-direction: column; background: #f1f1f2; overflow: hidden; }

.tabbar { height: 17px; flex: none; background: #cacaca; border-top: 1px solid #222; display: flex; align-items: center; color: #333; padding: 0 0 1px 6px; gap: 7px; }
.tab { width: 120px; height: 15px; background: #f4f4f4; border-radius: 4px 4px 0 0; display: flex; align-items: center; padding: 0 5px 0 4px; gap: 5px; }
.fav { width: 8px; height: 8px; fill: #fff; stroke: none; }
.fav rect { fill: #111; }
.tabtitle { flex: 1; font: 6px Roboto, sans-serif; white-space: nowrap; mask-image: linear-gradient(90deg, #000 85%, transparent); }
.winctl { margin: 0 8px 0 auto; display: flex; gap: 17px; }
.address { height: 20px; flex: none; background: #f4f4f4; display: flex; align-items: center; gap: 9px; padding-left: 5px; color: #444; font-family: Roboto, sans-serif; }
.pale { opacity: .3; }
.urlbox { flex: 1; margin-left: 3px; height: 15px; background: #fff; border: 1px solid #e6e6e6; border-radius: 8px; display: flex; align-items: center; padding: 0 4px 0 0; gap: 5px; font-size: 7px; }
.url { flex: 1; color: #777; text-decoration: none; }
.url b { color: #222; font-weight: 400; }
.readaloud { font-size: 8px; margin-right: 2px; }
.readaloud sup { font-size: 5px; }
.tools { display: flex; align-items: center; gap: 10px; padding: 0 5px 0 0; }
.person { width: 11px; height: 11px; stroke: none; fill: #777; margin-right: -5px; }
.person circle:first-child { fill: #ccc; }
.update { font-size: 7px; height: 14px; padding: 0 3px; border: 1px solid #ddd; border-radius: 7px; background: #fbfbfb; gap: 4px; }
.copilot { width: 11px; height: 11px; stroke: none; margin-left: -4px; }

.tv { flex: 1; min-height: 0; margin: 0 2px 1px; border-radius: 4px; background: #0e0e0e; color: #c8c8c8; display: grid; grid-template-columns: 28px 1fr 25px; grid-template-rows: 21px 1fr; overflow: hidden; font: 700 7px Lato, sans-serif; }
.tvhead { grid-column: 1 / -1; display: flex; align-items: center; border-bottom: 2px solid #222; }
.badge { font-size: 5px; line-height: 8px; padding: 0 2px; min-width: 8px; text-align: center; border-radius: 4px; background: #e5344a; color: #fff; position: absolute; top: -1px; right: -1px; }
.g-user { position: relative; width: 24px; display: flex; padding-left: 6px; }
.ava { width: 14px; height: 14px; border-radius: 50%; background: #8d6e63; color: #fff; font-size: 8px; line-height: 14px; text-align: center; }
.sym { width: 50px; padding-left: 7px; gap: 2px; justify-content: flex-start; color: #fff; }
.g-add { width: 23px; border-right: 1px solid #2a2a2a; }
.ints { width: 224px; padding: 0 5px 0 6px; display: flex; justify-content: space-between; align-items: center; }
.ints .on { background: #3d3d3d; border-radius: 2px; height: 16px; width: 11px; }
.g-can { width: 24px; border: 0 solid #2a2a2a; border-width: 0 1px; }
.g-ind { width: 66px; gap: 2px; justify-content: space-between; padding-left: 7px; }
.g-lay { width: 24px; border-right: 1px solid #2a2a2a; }
.g-al { width: 43px; gap: 4px; }
.g-rep { width: 45px; gap: 3px; border-right: 1px solid #2a2a2a; }
.g-undo { width: 40px; display: flex; justify-content: space-evenly; }
.g-right { margin-left: auto; display: flex; align-items: center; gap: 8px; padding-right: 3px; }
.layout { flex-direction: column; line-height: 7px; margin: 0 2px 0 2px; color: #fff; }
.layout small { font-size: 5px; line-height: 5px; color: #2f55e8; }
.vs { width: 1px; height: 11px; background: #333; }
.g-right .vs { margin-right: -4px; }
.publish { background: #f4f4f4; color: #111; border-radius: 7px; height: 14px; padding: 0 5px; margin-left: -3px; font-size: 8px; font-family: Lato, sans-serif; }

.left { border-right: 2px solid #292929; padding: 3px 0 9px; display: flex; flex-direction: column; align-items: center; }
.left button { width: 17px; height: 17px; margin-bottom: 2px; border-radius: 2px; flex: none; }
.left hr, .right hr { width: 17px; height: 1px; border: 0; background: #333; margin: 2px 0 4px; flex: none; }
.left .sel { background: #333; }
.left .inv { background: #f2f2f2; color: #222; }
.left .last { margin: auto 0 0; }
.right { border-left: 3px solid #242424; padding-right: 1px; display: flex; flex-direction: column; align-items: center; }
.right button { position: relative; height: 23px; width: 21px; flex: none; }
.right .gap { margin-top: auto; }
.right hr { margin: 1px 0 4px; }
.right .badge { top: 1px; }
svg.apps { width: 17px; height: 17px; fill: #111; stroke: none; }
.apps circle { fill: #fff; }

.center { display: flex; flex-direction: column; min-width: 0; }
.plotrow { flex: 1; min-height: 0; display: grid; grid-template-columns: 1fr 53px; background: linear-gradient(#141c29 0, #10141e 25%, #0a0d17 45%, #04070d 65%, #02050a 82%, #000 90%); }
.plot { position: relative; min-width: 0; overflow: hidden; }
.canvas { position: absolute; inset: 0; width: 100%; height: 100%; }
.wm1, .wm2 { position: absolute; color: #191c22; font-weight: 400; white-space: nowrap; font-family: "Liberation Sans", sans-serif; }
.wm1 { left: 37%; top: 160px; font-size: 40px; line-height: 46px; }
.wm2 { left: 34%; top: 202px; font-size: 19px; line-height: 24px; }
.zone { fill: #16180d; stroke: none; }
.gridl { stroke: #fff; stroke-opacity: .03; }
.teal1 { stroke: #2b9fac; }
.teal2 { stroke: #1b6462; }
.yel { stroke: #7d7730; }
.dsh { stroke: #737579; stroke-dasharray: 3 3; }
.dshw { stroke: #b4b4b4; stroke-dasharray: 3 3; }
.dot { stroke: #444; stroke-dasharray: 2 1; }
.gw { stroke: #176a58; }
.rw { stroke: #963039; }
.gb { stroke: #119780; stroke-width: 4.500; }
.rb { stroke: #ed3648; stroke-width: 4.500; }
.base1 { stroke: #15929e; stroke-width: 2; }
.base2 { stroke: #b9d6d8; stroke-width: 1; }
.draw { stroke: #22a9b6; stroke-width: 1.700; }
.arr { stroke: #eee; stroke-width: 1.500; }
.hand1 { fill: #0b1745; stroke: #2946a5; }
.hand2 { fill: #1a8da3; stroke: #1a8da3; }
.ev { stroke: #8e3a9c; }
.evd { fill: #f23645; stroke: none; }
.cursor, .logo { fill: #f4f4f4; stroke: none; }
.legend { position: absolute; top: 3px; left: 4px; font-size: 6px; font-weight: 400; color: #5b5f66; }
.chg { display: flex; align-items: center; gap: 10px; padding-left: 6px; height: 11px; color: #168a6b; }
.chg i { width: 4px; height: 4px; border-radius: 50%; background: #12a584; }
.trade { display: flex; align-items: center; gap: 4px; margin: 2px 0 3px; color: #eee; }
.trade b { font-size: 5px; }
.trade button { width: 24px; height: 17px; border: 1px solid; border-radius: 3px; background: #0b0b12; line-height: 7px; }
.trade .sell { color: #e2404d; }
.trade .buy { color: #3a5bea; }
.ind { height: 12px; display: flex; align-items: center; gap: 3px; }
.ind svg { color: #b5b5b5; }
.legend .fold { width: 14px; height: 10px; margin-top: 1px; border: 1px solid #2a2d33; border-radius: 2px; color: #bbb; }
.panebtns { position: absolute; top: 2px; right: 1px; display: flex; gap: 2px; }
.panebtns button { width: 12px; height: 12px; background: #0a0a0a; border-radius: 2px; }
.panebtns .w { background: #fff; color: #333; }
.addat { position: absolute; right: 1px; top: 133px; }
.prices { position: relative; padding: 19px 0 4px; display: flex; flex-direction: column; justify-content: space-between; font: 400 6px/16px Roboto, sans-serif; color: #b8babf; border-right: 1px solid #000; }
.prices span { padding-left: 5px; height: 16px; position: relative; }
.prices b { position: absolute; left: 1px; width: 50px; height: 9px; line-height: 9px; padding-left: 4px; font-weight: 400; }
.prices .span { position: absolute; left: 1px; width: 50px; top: 150px; height: 82px; background: #0c1a42; }
.cy { background: #14a9ba; color: #052a33; }
.gr { background: #43464d; color: #fff; }
.bl { background: #2962ff; color: #fff; }
.ye { background: #f3e440; color: #222; }
.prices .gn { background: #12966f; color: #d5f0e6; width: 22px; }
.mk { position: absolute; left: 0; width: 3px; height: 5px; border-radius: 0 3px 3px 0; background: #eee; }

.times { position: relative; height: 15px; flex: none; background: #000; font-size: 6px; line-height: 17px; font-weight: 400; color: #aaa; }
.times > span, .times > b, .times > svg { position: absolute; transform: translateX(-50%); white-space: nowrap; }
.times > b { top: 2px; height: 12px; line-height: 12px; padding: 0 6px; color: #fff; font-weight: 700; }
.times > svg { top: 4px; }
.tg { background: #3f4045; }
.tb { background: #2962ff; }
.float { position: absolute; background: #1c1c1c; border-radius: 2px; display: flex; align-items: center; }
.float svg { color: #b8b8b8; }
.edit { left: 84px; top: -1px; height: 17px; gap: 7px; padding: 0 3px 0 1px; color: #ccc; }
.px { display: flex; align-items: center; gap: 4px; width: 26px; font-size: 7px; font-weight: 700; }
.px i { width: 9px; height: 1px; background: #fff; }
.range { height: 20px; flex: none; border-top: 1px solid #202020; display: flex; align-items: center; gap: 6px; padding: 0 5px 0 7px; }
.range time { margin-left: auto; }
.panels { position: relative; border-top: 2px solid #292929; height: 36px; flex: none; display: flex; align-items: flex-start; padding: 1px 4px 0 3px; gap: 6px; }
.panels > button { height: 16px; padding: 0 5px; border-radius: 2px; }
.panels .on { background: #3a3a3a; }
.pctl { margin: 3px 1px 0 auto; display: flex; gap: 9px; }
.favsbar { left: 476px; top: 3px; height: 19px; gap: 7px; padding: 0 4px 0 0; }

.taskbar { height: 25px; flex: none; display: grid; grid-template-columns: 1fr auto 1fr; align-items: center; background: linear-gradient(90deg, #e4dde9, #e9dce9 40%, #ecd9e1); color: #333; font-size: 6px; line-height: 8px; }
.weather { display: flex; align-items: center; padding-left: 10px; gap: 1px; color: #555; }
.weather svg { width: 14px; height: 14px; stroke: none; }
.apps-row { display: flex; align-items: center; gap: 10px; }
svg.app { width: 12px; height: 12px; stroke: none; }
.find { width: 108px; height: 15px; margin: 0 -3px 0 -4px; border-radius: 8px; background: #faf6fa; display: flex; align-items: center; padding: 0 1px 0 4px; gap: 4px; }
.find input { flex: 1; min-width: 0; border: 0; padding: 0; background: none; font: 7px "Open Sans", sans-serif; }
.find input::placeholder { color: #555; }
svg.bat { width: 24px; height: 12px; stroke: none; }
.active { background: #f7eef5; border-radius: 2px; padding: 3px 3px 2px; margin: 0 -3px; border-bottom: 2px solid #5b62c9; }
.run { padding-top: 4px; background: radial-gradient(circle at 50% 100%, #777 2px, transparent 2px); padding-bottom: 2px; }
.tray { justify-self: end; display: flex; align-items: center; gap: 7px; padding-right: 10px; }
.tray span { display: flex; gap: 3px; }
.tray time { text-align: right; margin-left: -1px; }
.mic { color: #5560d0; }

.people { background: #000; display: flex; flex-direction: column; position: relative; padding: 0 0 0 2px; justify-content: center; }
.brand { position: absolute; top: 34px; right: 40px; display: flex; align-items: center; gap: 10px; color: #fff; font: 400 18px/24px Lato, sans-serif; }
.brand svg { width: 26px; height: 21px; stroke: none; }
.tile { aspect-ratio: 318 / 180; background: #111; border-radius: 2px; display: flex; align-items: center; justify-content: center; position: relative; }
.initial { width: 80px; height: 80px; border-radius: 50%; background: #455a64; color: #fff; font: 400 44px/80px "Liberation Sans", sans-serif; text-align: center; }
.tile p { position: absolute; left: 8px; bottom: 2px; color: #e8e8e8; font: 400 12px/20px "Noto Sans", sans-serif; }
```
